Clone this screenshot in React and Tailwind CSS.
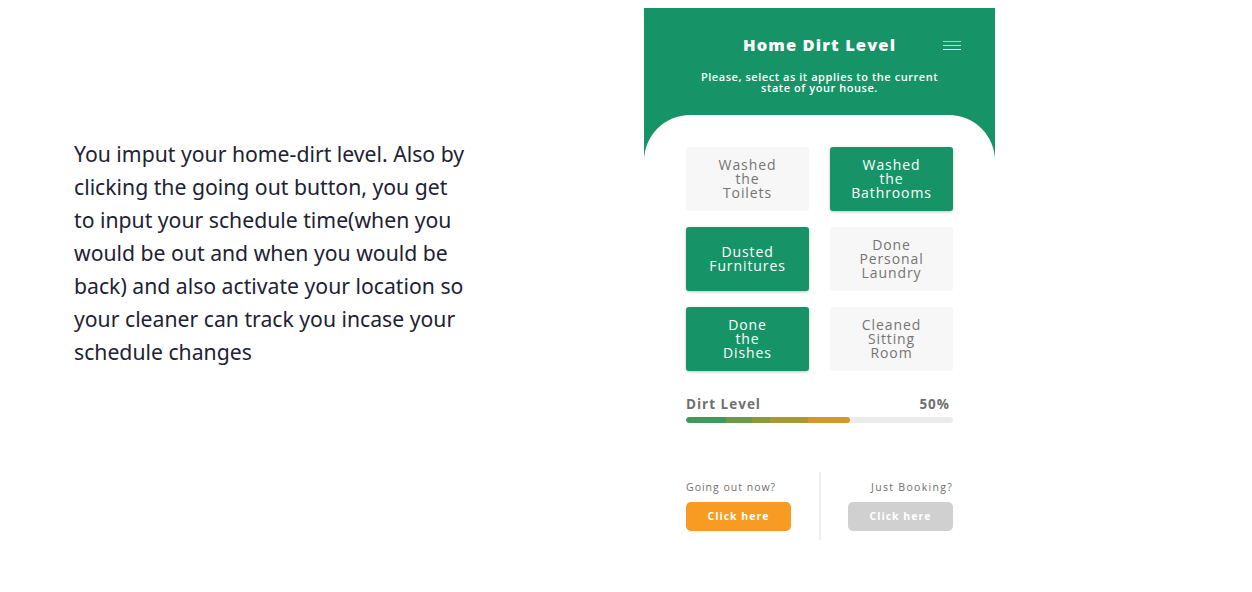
const tasks = [
  { label: ['Washed', 'the', 'Toilets'], on: false },
  { label: ['Washed', 'the', 'Bathrooms'], on: true },
  { label: ['Dusted', 'Furnitures'], on: true },
  { label: ['Done', 'Personal', 'Laundry'], on: false },
  { label: ['Done', 'the', 'Dishes'], on: true },
  { label: ['Cleaned', 'Sitting', 'Room'], on: false },
];

function Menu() {
  return (
    <div className="flex flex-col gap-[3px] w-[18px]">
      <span className="h-[1px] bg-white/60" />
      <span className="h-[1px] bg-white/70" />
      <span className="h-[1px] bg-white" />
    </div>
  );
}

function Phone() {
  return (
    <div className="w-[351px] bg-[#179467] font-['Open_Sans',sans-serif]">
      {/* Header */}
      <div className="relative pt-[27px] h-[107px] text-white text-center">
        <h1 className="text-[16.5px] font-extrabold leading-[20px] tracking-[1.1px]">Home Dirt Level</h1>
        <div className="absolute right-[34px] top-[33px]">
          <Menu />
        </div>
        <p className="mt-[16px] mx-auto w-[260px] text-[11px] font-semibold leading-[11px] tracking-[0.55px]">
          Please, select as it applies to the current state of your house.
        </p>
      </div>

      {/* Card */}
      <div className="bg-white rounded-t-[46px] pt-[32px] pb-[50px] px-[42px]">
        <div className="grid grid-cols-2 gap-x-[21px] gap-y-[16px]">
          {tasks.map((t, i) => (
            <div
              key={i}
              className={
                'h-[64px] rounded-[3px] flex flex-col items-center justify-center text-[14px] leading-[14px] tracking-[0.9px] ' +
                (t.on
                  ? 'bg-[#179467] text-white shadow-[0_1px_3px_rgba(0,0,0,0.25)]'
                  : 'bg-[#f7f7f7] text-[#757575]')
              }
            >
              {t.label.map((l) => (
                <span key={l} className="block">{l}</span>
              ))}
            </div>
          ))}
        </div>

        <div className="mt-[25px] flex justify-between pr-[3px] text-[13.5px] font-bold text-[#6f6f6f] leading-[16px] tracking-[1px]">
          <span>Dirt Level</span>
          <span>50%</span>
        </div>
        <div className="mt-[5px] h-[6px] rounded-full bg-[#ebebeb] overflow-hidden">
          <div className="h-full w-[164px] rounded-full overflow-hidden flex">
            <div className="w-[40px] bg-[#3d9a5c]" />
            <div className="w-[26px] bg-[#6a9a48]" />
            <div className="w-[18px] bg-[#8a9a3a]" />
            <div className="w-[38px] bg-[#a89a30]" />
            <div className="flex-1 bg-[#d4982a]" />
          </div>
        </div>

        <div className="mt-[49px] flex">
          <div className="flex-1 pt-[9px] pb-[9px]">
            <p className="text-[10.5px] text-[#6f6f6f] leading-[12px] tracking-[1px]">Going out now?</p>
            <button className="mt-[9px] w-[105px] h-[29px] rounded-[5px] bg-[#f79b22] text-white text-[10.5px] font-bold tracking-[1px]">
              Click here
            </button>
          </div>
          <div className="w-[2px] bg-[#eeeeee]" />
          <div className="flex-1 pt-[9px] pb-[9px] flex flex-col items-end">
            <p className="text-[10.5px] text-[#6f6f6f] leading-[12px] tracking-[1.3px]">Just Booking?</p>
            <button className="mt-[9px] w-[105px] h-[29px] rounded-[5px] bg-[#d0d0d0] text-white text-[10.5px] font-bold tracking-[1px]">
              Click here
            </button>
          </div>
        </div>
      </div>
    </div>
  );
}

export default function App() {
  return (
    <div className="w-[1252px] h-[592px] bg-white flex items-start overflow-hidden">
      <div className="w-[644px] shrink-0 pl-[74px] pt-[137px]">
        <p className="w-[398px] text-[21.2px] leading-[33px] text-[#1f2233] font-['Noto_Sans',sans-serif]">
          You imput your home-dirt level. Also by clicking the going out button, you get to input your schedule time(when you would be out and when you would be back) and also activate your location so your cleaner can track you incase your schedule changes
        </p>
      </div>
      <div className="mt-[8px]">
        <Phone />
      </div>
    </div>
  );
}
